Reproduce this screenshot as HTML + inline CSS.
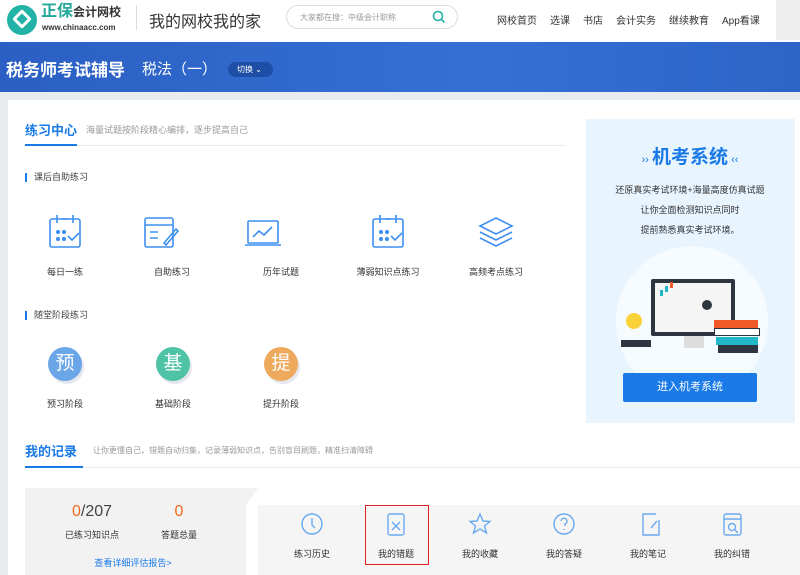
<!DOCTYPE html>
<html><head><meta charset="utf-8"><style>
*{margin:0;padding:0;box-sizing:border-box}
body{width:800px;height:575px;overflow:hidden;background:#e9ecef;font-family:"Liberation Sans","Noto Sans CJK SC",sans-serif;position:relative}
.a{position:absolute}
.c{text-align:center;transform:translateX(-50%);white-space:nowrap}
.hdr{left:0;top:0;width:800px;height:42px;background:#fff}
.nav span{margin-left:13px;font-size:10px;color:#333}
.ban{left:0;top:42px;width:800px;height:50px;background:linear-gradient(90deg,#2b5fc3,#3470d4 60%,#2d64c8)}
.main{left:8px;top:100px;width:792px;height:475px;background:#fff}
.lbl{font-size:9px;color:#333}
.sub{font-size:9px;color:#444;padding-left:7px;border-left:2px solid #1a7ae8;line-height:9px}
</style></head><body>
<div class="a hdr"></div>
<div class="a" style="left:7px;top:5px;width:30px;height:30px;border-radius:50%;background:#23b3a6"></div>
<div class="a" style="left:15px;top:12px;width:14px;height:14px;border:3px solid #fff;border-radius:2px;transform:rotate(45deg)"></div>
<div class="a" style="left:41px;top:3px;font-size:16px;line-height:18px;font-weight:bold;color:#23a89a">正保<span style="color:#333;font-size:12px">会计网校</span></div>
<div class="a" style="left:42px;top:23px;font-size:8px;line-height:10px;font-weight:bold;color:#333">www.chinaacc.com</div>
<div class="a" style="left:136px;top:5px;width:1px;height:25px;background:#ddd"></div>
<div class="a" style="left:149px;top:8px;font-size:16px;color:#333">我的网校我的家</div>
<div class="a" style="left:286px;top:5px;width:172px;height:24px;border:1px solid #ddd;border-radius:12px"></div>
<div class="a" style="left:300px;top:12px;font-size:8px;color:#999">大家都在搜：中级会计职称</div>
<svg class="a" style="left:432px;top:10px" width="14" height="14"><circle cx="6" cy="6" r="4.5" fill="none" stroke="#23b3a6" stroke-width="1.6"/><line x1="9.5" y1="9.5" x2="12.5" y2="12.5" stroke="#23b3a6" stroke-width="1.6"/></svg>
<div class="a nav" style="left:484px;top:11px"><span>网校首页</span><span>选课</span><span>书店</span><span>会计实务</span><span>继续教育</span><span>App看课</span></div>
<div class="a" style="left:776px;top:0;width:24px;height:40px;background:#eee"></div>
<div class="a ban"></div>
<div class="a" style="left:6px;top:56px;font-size:17px;font-weight:bold;color:#fff">税务师考试辅导</div>
<div class="a" style="left:142px;top:58px;font-size:15px;color:#fff">税法（一）</div>
<div class="a" style="left:228px;top:62px;width:45px;height:15px;border-radius:8px;background:#1f4ea6;font-size:8px;line-height:11px;color:#fff;padding:2px 0 0 9px">切换 ⌄</div>
<div class="a main"></div>
<div class="a" style="left:25px;top:120px;font-size:13px;font-weight:bold;color:#1a7ae8">练习中心</div>
<div class="a" style="left:86px;top:123px;font-size:9px;color:#999">海量试题按阶段精心编排，逐步提高自己</div>
<div class="a" style="left:25px;top:145px;width:540px;height:1px;background:#e8e8e8"></div>
<div class="a" style="left:25px;top:144px;width:52px;height:2px;background:#1a7ae8"></div>
<div class="a sub" style="left:25px;top:173px">课后自助练习</div>
<svg class="a" style="left:0;top:205px" width="560" height="50" fill="none" stroke="#3d8ff0" stroke-width="1.6">
<rect x="50" y="14" width="30" height="28" rx="2"/><path d="M57 10v8M73 10v8M62 14h6"/><circle cx="58" cy="27" r="1.3" fill="#3d8ff0"/><circle cx="64" cy="27" r="1.3" fill="#3d8ff0"/><circle cx="58" cy="34" r="1.3" fill="#3d8ff0"/><circle cx="64" cy="34" r="1.3" fill="#3d8ff0"/><path d="M68 31l4 4 7-7"/>
<rect x="145" y="13" width="28" height="29" rx="2"/><path d="M145 20h28M150 27h8M150 33h8M164 38l12-14 2 2-12 14z"/>
<rect x="248" y="16" width="30" height="22" rx="1"/><path d="M245 40h36M253 32l6-6 5 4 8-8"/>
<rect x="373" y="14" width="30" height="28" rx="2"/><path d="M380 10v8M396 10v8M385 14h6"/><circle cx="381" cy="27" r="1.3" fill="#3d8ff0"/><circle cx="387" cy="27" r="1.3" fill="#3d8ff0"/><circle cx="381" cy="34" r="1.3" fill="#3d8ff0"/><circle cx="387" cy="34" r="1.3" fill="#3d8ff0"/><path d="M391 31l4 4 7-7"/>
<path d="M496 13l16 8-16 8-16-8zM480 27l16 8 16-8M480 33l16 8 16-8"/>
</svg>
<div class="a c lbl" style="left:65px;top:265px">每日一练</div>
<div class="a c lbl" style="left:172px;top:265px">自助练习</div>
<div class="a c lbl" style="left:281px;top:265px">历年试题</div>
<div class="a c lbl" style="left:388px;top:265px">薄弱知识点练习</div>
<div class="a c lbl" style="left:496px;top:265px">高频考点练习</div>
<div class="a sub" style="left:25px;top:311px">随堂阶段练习</div>
<div class="a" style="left:48px;top:347px;width:34px;height:34px;border-radius:50%;background:#6aa6e8;color:#fff;font-size:19px;text-align:center;line-height:34px;box-shadow:2px 3px 0 #e4e8ee">预</div>
<div class="a" style="left:156px;top:347px;width:34px;height:34px;border-radius:50%;background:#4fc3a5;color:#fff;font-size:19px;text-align:center;line-height:34px;box-shadow:2px 3px 0 #e4e8ee">基</div>
<div class="a" style="left:264px;top:347px;width:34px;height:34px;border-radius:50%;background:#eeaa5c;color:#fff;font-size:19px;text-align:center;line-height:34px;box-shadow:2px 3px 0 #e4e8ee">提</div>
<div class="a c lbl" style="left:65px;top:397px">预习阶段</div>
<div class="a c lbl" style="left:173px;top:397px">基础阶段</div>
<div class="a c lbl" style="left:281px;top:397px">提升阶段</div>
<div class="a" style="left:586px;top:119px;width:209px;height:304px;background:#e8f4fe"></div>
<div class="a c" style="left:690px;top:142px;font-size:19px;font-weight:bold;color:#1a7ae8"><span style="font-size:11px;font-weight:normal">›› </span>机考系统<span style="font-size:11px;font-weight:normal"> ‹‹</span></div>
<div class="a c" style="left:690px;top:180px;font-size:9px;color:#333;line-height:20px">还原真实考试环境+海量高度仿真试题<br>让你全面检测知识点同时<br>提前熟悉真实考试环境。</div>
<div class="a" style="left:616px;top:246px;width:152px;height:152px;border-radius:50%;background:#f6fbff"></div>
<div class="a" style="left:651px;top:279px;width:84px;height:57px;background:#2d3640;border-radius:2px"></div>
<div class="a" style="left:655px;top:283px;width:76px;height:49px;background:#f5f5f5"></div>
<div class="a" style="left:660px;top:290px;width:3px;height:6px;background:#20b8c8;box-shadow:5px -4px 0 #20b8c8,10px -8px 0 #f05a28"></div>
<div class="a" style="left:702px;top:300px;width:10px;height:10px;border-radius:50%;background:#2d3640"></div>
<div class="a" style="left:684px;top:336px;width:20px;height:12px;background:#ddd"></div>
<div class="a" style="left:714px;top:320px;width:44px;height:8px;background:#f05a28"></div>
<div class="a" style="left:714px;top:328px;width:46px;height:8px;background:#fff;border:1px solid #2d3640"></div>
<div class="a" style="left:716px;top:337px;width:42px;height:8px;background:#20b8c8"></div>
<div class="a" style="left:718px;top:345px;width:40px;height:8px;background:#2d3640"></div>
<div class="a" style="left:626px;top:313px;width:16px;height:16px;border-radius:50%;background:#f9d23a"></div>
<div class="a" style="left:621px;top:340px;width:30px;height:7px;background:#2d3640"></div>
<div class="a" style="left:623px;top:373px;width:134px;height:29px;background:#1a7ae8;border-radius:2px;color:#fff;font-size:11px;text-align:center;line-height:29px">进入机考系统</div>
<div class="a" style="left:25px;top:441px;font-size:13px;font-weight:bold;color:#1a7ae8">我的记录</div>
<div class="a" style="left:93px;top:445px;font-size:8px;color:#999">让你更懂自己，错题自动归集，记录薄弱知识点，告别盲目刷题，精准扫清障碍</div>
<div class="a" style="left:25px;top:467px;width:775px;height:1px;background:#e8e8e8"></div>
<div class="a" style="left:25px;top:466px;width:58px;height:2px;background:#1a7ae8"></div>
<div class="a" style="left:25px;top:488px;width:221px;height:87px;background:#f2f2f2"></div>
<div class="a" style="left:246px;top:488px;width:0;height:0;border-left:12px solid #f2f2f2;border-bottom:17px solid transparent"></div>
<div class="a" style="left:258px;top:505px;width:542px;height:70px;background:#f5f5f5"></div>
<div class="a c" style="left:92px;top:503px;font-size:16px;color:#444"><span style="color:#f06a1e">0</span>/207</div>
<div class="a c" style="left:179px;top:503px;font-size:16px;color:#f06a1e">0</div>
<div class="a c lbl" style="left:92px;top:528px">已练习知识点</div>
<div class="a c lbl" style="left:179px;top:528px">答题总量</div>
<div class="a c" style="left:133px;top:556px;font-size:9px;color:#1a7ae8">查看详细评估报告&gt;</div>
<div class="a" style="left:365px;top:505px;width:64px;height:60px;border:1.5px solid #e02020"></div>
<svg class="a" style="left:290px;top:512px" width="460" height="26" fill="none" stroke="#6aa9f0" stroke-width="1.4">
<circle cx="22" cy="12" r="10"/><path d="M22 6v7l3 3"/>
<rect x="98" y="2" width="16" height="21" rx="2"/><path d="M102 10l8 8M110 10l-8 8"/>
<path d="M190 2l3 7 7 .5-5.5 4.5 2 7-6.5-4-6.5 4 2-7-5.5-4.5 7-.5z"/>
<circle cx="274" cy="12" r="10"/><path d="M271 9a3 3 0 1 1 4 3v2M274 17v1"/>
<path d="M366 2h-13v21h16V8M361 16l6-7"/>
<rect x="434" y="2" width="17" height="21" rx="2"/><path d="M434 7h17"/><circle cx="442" cy="15" r="3.5"/><path d="M445 18l3 3"/>
</svg>
<div class="a c lbl" style="left:312px;top:547px">练习历史</div>
<div class="a c lbl" style="left:396px;top:547px">我的错题</div>
<div class="a c lbl" style="left:480px;top:547px">我的收藏</div>
<div class="a c lbl" style="left:564px;top:547px">我的答疑</div>
<div class="a c lbl" style="left:648px;top:547px">我的笔记</div>
<div class="a c lbl" style="left:732px;top:547px">我的纠错</div>
</body></html>
